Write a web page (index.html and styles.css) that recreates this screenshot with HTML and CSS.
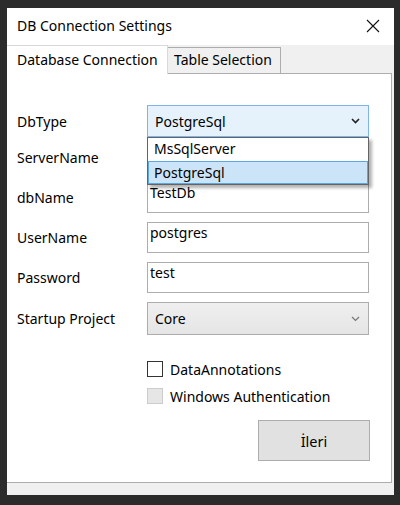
FILE: index.html
```html
<!DOCTYPE html>
<html>
<head>
<meta charset="utf-8">
<link rel="stylesheet" href="styles.css">
</head>
<body>
<div class="window">
  <div class="titlebar">
    <span class="title">DB Connection Settings</span>
    <svg class="close" width="14" height="14" viewBox="0 0 14 14"><path d="M1 1L13 13M13 1L1 13" stroke="#111" stroke-width="1.1" fill="none"/></svg>
  </div>
  <div class="tabstrip">
    <div class="tab active">Database Connection</div>
    <div class="tab">Table Selection</div>
    <div class="tabfill"></div>
  </div>
  <div class="panel">
    <div class="form">
      <div class="row r-first">
        <span class="label">DbType</span>
        <div class="combo open">
          <span>PostgreSql</span>
          <svg class="chev" width="9" height="6" viewBox="0 0 9 6"><path d="M1 1L4.5 4.5L8 1" stroke="#222" stroke-width="1.6" fill="none"/></svg>
          <div class="dropdown">
            <div class="opt">MsSqlServer</div>
            <div class="opt sel">PostgreSql</div>
          </div>
        </div>
      </div>
      <div class="row">
        <span class="label">ServerName</span>
        <div class="textbox"></div>
      </div>
      <div class="row">
        <span class="label">dbName</span>
        <div class="textbox">TestDb</div>
      </div>
      <div class="row">
        <span class="label">UserName</span>
        <div class="textbox">postgres</div>
      </div>
      <div class="row">
        <span class="label">Password</span>
        <div class="textbox">test</div>
      </div>
      <div class="row r-combo">
        <span class="label">Startup Project</span>
        <div class="combo gray">
          <span>Core</span>
          <svg class="chev" width="9" height="6" viewBox="0 0 9 6"><path d="M1 1L4.5 4.5L8 1" stroke="#777" stroke-width="1.2" fill="none"/></svg>
        </div>
      </div>
    </div>
    <div class="checks">
      <label class="check"><span class="box"></span>DataAnnotations</label>
      <label class="check"><span class="box disabled"></span>Windows Authentication</label>
    </div>
    <div class="actions">
      <div class="button">İleri</div>
    </div>
  </div>
  <div class="bottom"></div>
</div>
</body>
</html>
```

FILE: styles.css
```css
html, body {
  margin: 0;
  padding: 0;
  background: #2b2b2b;
  width: 400px;
  height: 505px;
  overflow: hidden;
}
.window {
  margin: 8px 0 0 7px;
  width: 387px;
  height: 487px;
  background: #f0f0f0;
  font-family: "Noto Sans", "Open Sans", sans-serif;
  font-size: 14px;
  color: #000;
  display: flex;
  flex-direction: column;
}
.titlebar {
  height: 37px;
  background: #fff;
  display: flex;
  align-items: center;
  justify-content: space-between;
  padding: 0 14px 0 10px;
  box-sizing: border-box;
}
.title {
  font-size: 14px;
  margin-top: -2px;
}
.close { margin-top: -2px; }
.tabstrip {
  display: flex;
  height: 28px;
  align-items: flex-start;
}
.tab {
  box-sizing: border-box;
  padding: 0 0 0 8px;
  font-size: 14px;
}
.tab.active {
  width: 161px;
  height: 29px;
  background: #fff;
  border-top: 1px solid #d9d9d9;
  border-right: 1px solid #d9d9d9;
  padding-left: 10px;
  line-height: 27px;
  position: relative;
  z-index: 1;
}
.tab:not(.active) {
  margin-top: 2px;
  width: 113px;
  height: 26px;
  background: #f0f0f0;
  border: 1px solid #adadad;
  border-left: none;
  border-bottom: none;
  padding-left: 6px;
  line-height: 24px;
}
.tabfill { flex: 1; }
.panel {
  box-sizing: border-box;
  width: 385px;
  height: 410px;
  background: #fff;
  border: 1px solid #adadad;
  border-left: none;
  position: relative;
  display: flex;
  flex-direction: column;
}
.form {
  display: flex;
  flex-direction: column;
  gap: 9px;
  padding-top: 31px;
}
.row {
  display: flex;
  align-items: center;
  height: 31px;
}
.row.r-first { height: 32px; margin-bottom: -4px; }
.row.r-combo { height: 33px; }
.label {
  width: 140px;
  padding-left: 10px;
  box-sizing: border-box;
  font-size: 14px;
}
.textbox {
  box-sizing: border-box;
  width: 222px;
  height: 100%;
  border: 1px solid #adadad;
  padding: 0 2px;
  font-size: 14px;
  line-height: 19px;
}
.combo {
  box-sizing: border-box;
  width: 222px;
  height: 100%;
  border: 1px solid #adadad;
  display: flex;
  align-items: center;
  justify-content: space-between;
  padding: 0 8px 0 7px;
  font-size: 14px;
  position: relative;
}
.combo.open {
  background: #e5f1fb;
  border-color: #7eb4ea;
}
.combo.gray {
  background: linear-gradient(#efefef, #e5e5e5);
}
.dropdown {
  position: absolute;
  left: -1px;
  top: 31px;
  width: 222px;
  box-sizing: border-box;
  background: #fff;
  border: 1px solid #646464;
  box-shadow: 3px 3px 3px rgba(0,0,0,0.3);
  z-index: 5;
}
.opt {
  height: 23px;
  line-height: 22px;
  padding-left: 6px;
  box-sizing: border-box;
}
.opt.sel {
  background: #cce4f7;
  border: 1px solid #5aa7e2;
  padding-left: 5px;
}
.checks {
  display: flex;
  flex-direction: column;
  gap: 11px;
  margin: 26px 0 0 140px;
}
.check {
  display: flex;
  align-items: center;
  gap: 7px;
  height: 16px;
  font-size: 14px;
}
.box {
  box-sizing: border-box;
  width: 16px;
  height: 16px;
  border: 1px solid #333;
  background: #fff;
}
.box.disabled {
  border-color: #cccccc;
  background: #e6e6e6;
}
.actions {
  display: flex;
  justify-content: flex-end;
  padding-right: 21px;
  margin-top: 16px;
}
.button {
  box-sizing: border-box;
  width: 112px;
  height: 41px;
  background: #e1e1e1;
  border: 1px solid #adadad;
  display: flex;
  align-items: center;
  justify-content: center;
  font-size: 14.5px;
}
.bottom { flex: 1; }
```
